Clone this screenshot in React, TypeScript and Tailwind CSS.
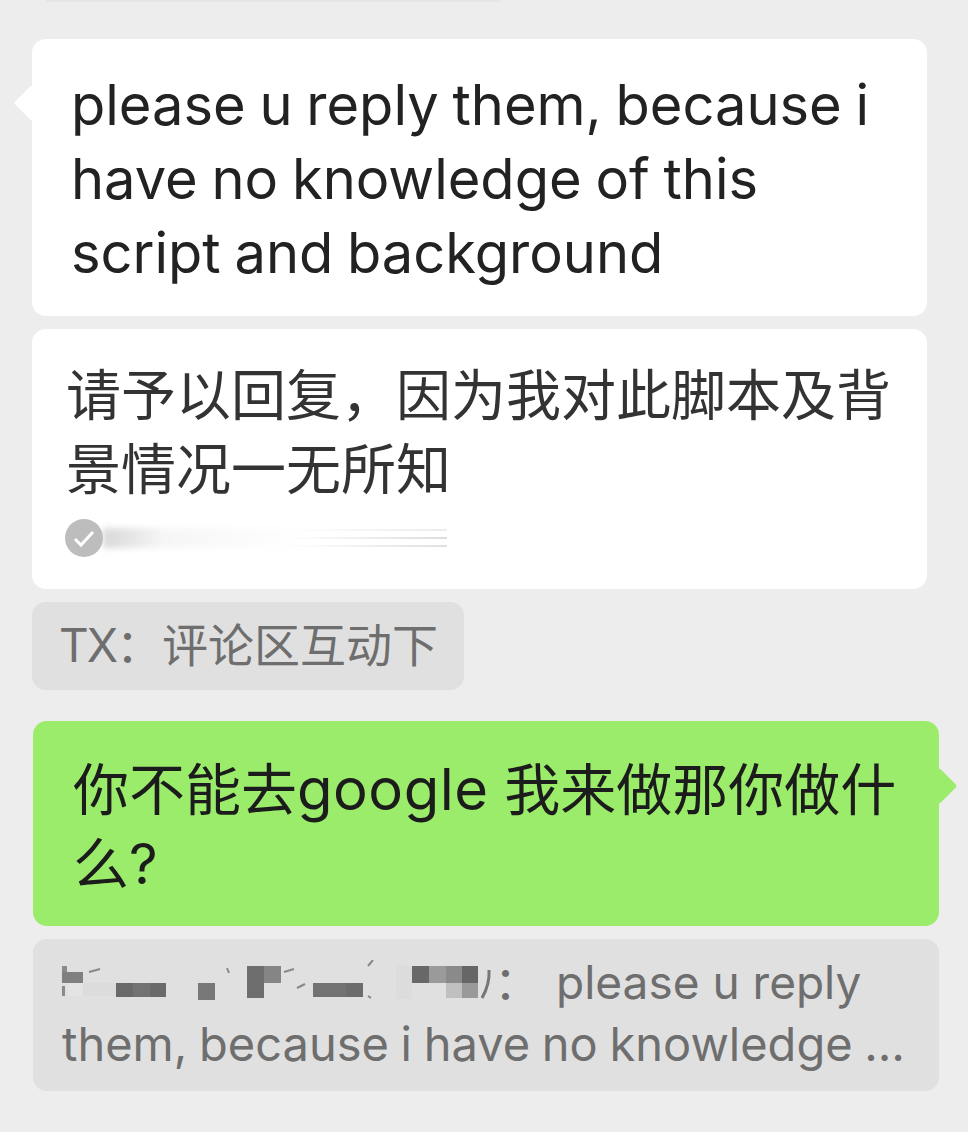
const font = "font-['Inter','Noto_Sans_CJK_SC',sans-serif]";

function Mosaic() {
  const blocks: [number, number, number, number, string][] = [
    [0, 6, 21, 11, "#808080"],
    [0, 0, 5, 6, "#8a8a8a"],
    [0, 20, 3, 10, "#8a8a8a"],
    [6, 17, 15, 13, "#e4e4e4"],
    [21, 17, 33, 13, "#dcdcdc"],
    [54, 17, 17, 14, "#696969"],
    [71, 17, 17, 14, "#727272"],
    [88, 17, 16, 14, "#6a6a6a"],
    [136, 17, 17, 17, "#787878"],
    [185, 0, 17, 32, "#6e6e6e"],
    [202, 0, 17, 17, "#858585"],
    [251, 17, 33, 14, "#727272"],
    [284, 17, 17, 14, "#6c6c6c"],
    [334, 0, 16, 33, "#dcdcdc"],
    [350, 0, 17, 17, "#686868"],
    [367, 0, 17, 17, "#9a9a9a"],
    [384, 0, 16, 17, "#8a8a8a"],
    [400, 0, 16, 17, "#666666"],
    [384, 17, 16, 15, "#c0c0c0"],
    [400, 17, 16, 15, "#999999"],
  ];
  return (
    <svg width="441" height="44" viewBox="0 0 441 44" className="shrink-0">
      {blocks.map(([x, y, w, h, fill], i) => (
        <rect key={i} x={x} y={y + 6} width={w} height={h} fill={fill} />
      ))}
      <path d="M27 12 L38 9 M165 8 L167 13 M222 12 L232 9 M235 28 L243 24 M306 36 L309 38 M306 6 L311 0" fill="none" stroke="#888" strokeWidth="2" />
      <path d="M427 10 Q428 24 420 38" fill="none" stroke="#777" strokeWidth="3" />
    </svg>
  );
}

function ReadReceipt() {
  return (
    <div className="mt-[13px] flex h-[38px] items-center">
      <svg width="38" height="38" viewBox="0 0 38 38" className="relative z-10 ml-[-1px] shrink-0">
        <circle cx="19" cy="19" r="19" fill="#bdbdbd" />
        <path d="M10 20 L16 26 L28 13" fill="none" stroke="#fff" strokeWidth="3" />
      </svg>
      <div className="relative h-[20px] w-[344px]">
        <div className="h-full w-[200px] bg-gradient-to-r from-[#d8d8d8] via-[#f6f6f6] via-30% to-white blur-[3px]" />
        <div className="absolute right-0 top-0 flex h-full w-[160px] flex-col justify-between py-[1px]">
          <div className="h-[2px] bg-gradient-to-r from-transparent to-[#ececec]" />
          <div className="h-[2px] bg-gradient-to-r from-transparent to-[#dddddd]" />
          <div className="h-[2px] bg-gradient-to-r from-transparent to-[#e0e0e0]" />
        </div>
      </div>
    </div>
  );
}

export default function App() {
  return (
    <div className={`${font} h-[1132px] w-[968px] overflow-hidden bg-[#ededed]`}>
      <div className="mx-[46px] h-[2px] w-[454px] bg-[#e6e6e6]" />

      <div className="relative ml-[32px] mt-[37px] h-[277px] w-[895px] rounded-[14px] bg-white pl-[39px] pt-[29px] text-[56px] leading-[74px] text-[#222222] [word-spacing:-2px]">
        <div className="absolute left-[-13px] top-[51px] h-[26px] w-[26px] rotate-45 rounded-[3px] bg-white" />
        <p className="relative whitespace-nowrap">
          please u reply them, because i
          <br />
          have no knowledge of this
          <br />
          script and background
        </p>
      </div>

      <div className="ml-[32px] mt-[13px] h-[260px] w-[895px] rounded-[14px] bg-white pl-[34px] pt-[29px] text-[55px] leading-[74px] text-[#333333]">
        <p className="whitespace-nowrap">
          请予以回复，因为我对此脚本及背
          <br />
          景情况一无所知
        </p>
        <ReadReceipt />
      </div>

      <div className="ml-[32px] mt-[13px] h-[88px] w-[432px] whitespace-nowrap rounded-[14px] bg-[#e0e0e0] pl-[27px] pt-[12px] text-[46px] leading-[62px] text-[#6e6e6e]">
        <span className="tracking-[-2px]">TX</span>：评论区互动下
      </div>

      <div className="relative ml-[33px] mt-[31px] h-[205px] w-[906px] rounded-[14px] bg-[#9bec6b] pl-[40px] pt-[31px] text-[56px] leading-[74px] text-[#1c1c1c]">
        <div className="absolute right-[-13px] top-[52px] h-[26px] w-[26px] rotate-45 rounded-[3px] bg-[#9bec6b]" />
        <p className="relative whitespace-nowrap">
          你不能去<span className="text-[58px] tracking-[0.5px]">google</span> 我来做那你做什
          <br />
          么?
        </p>
      </div>

      <div className="ml-[33px] mt-[13px] h-[152px] w-[906px] rounded-[14px] bg-[#e0e0e0] pl-[29px] pt-[12px] text-[46px] leading-[62px] text-[#6e6e6e]">
        <div className="flex h-[62px] items-center whitespace-nowrap">
          <Mosaic />
          <span className="ml-[-9px] mr-[16px]">：</span>
          <span>please u reply</span>
        </div>
        <p className="whitespace-nowrap text-[47px] [word-spacing:-1.5px]">them, because i have no knowledge …</p>
      </div>
    </div>
  );
}
